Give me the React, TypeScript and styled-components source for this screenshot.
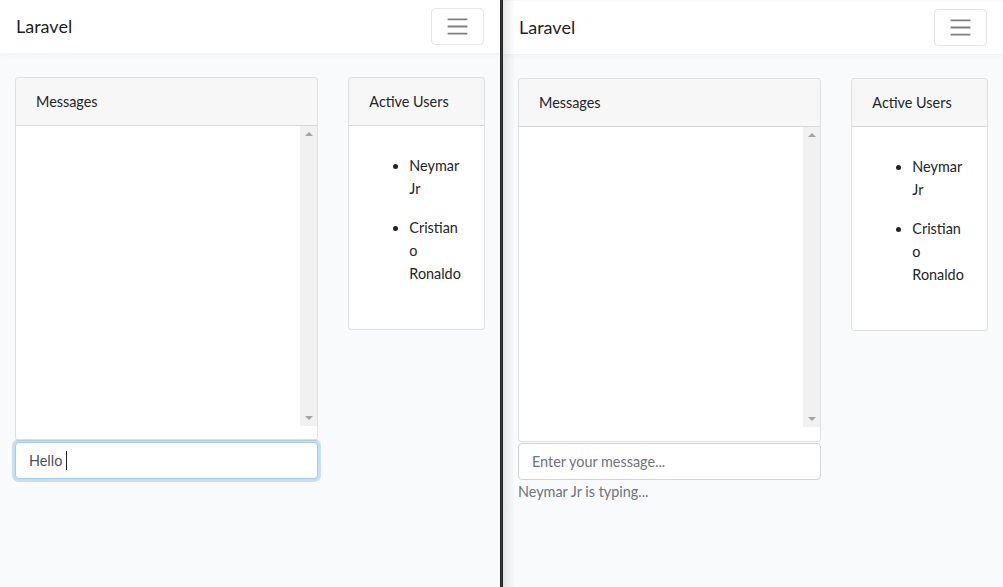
import React from "react";
import styled, { createGlobalStyle } from "styled-components";

const Global = createGlobalStyle`
  html, body { margin: 0; padding: 0; background: #f8fafc; }
  body {
    font-family: Lato, "Noto Sans", sans-serif;
    font-size: 14.4px;
    line-height: 1.6;
    color: #212529;
  }
  * { box-sizing: border-box; }
`;

const Screen = styled.div`
  display: flex;
  width: 1003px;
  height: 587px;
  overflow: hidden;
`;

const Pane = styled.div<{ $shift: number; $shadow?: boolean }>`
  position: relative;
  width: 500px;
  flex: 0 0 500px;
  height: 100%;
  background: #f8fafc;
  padding-top: ${(p) => p.$shift}px;
  &::before {
    content: "";
    display: ${(p) => (p.$shadow ? "block" : "none")};
    position: absolute;
    top: 0;
    left: 0;
    bottom: 0;
    width: 12px;
    background: linear-gradient(to right, rgba(0, 0, 0, 0.09), rgba(0, 0, 0, 0));
    pointer-events: none;
    z-index: 5;
  }
`;

const TopFill = styled.div`
  background: #fff;
`;

const Divider = styled.div`
  flex: 0 0 3px;
  width: 3px;
  height: 100%;
  background: linear-gradient(to right, #1c1c1c, #3a3a3a, #1c1c1c);
`;

const Navbar = styled.nav`
  display: flex;
  align-items: center;
  justify-content: space-between;
  height: 53px;
  padding: 8px 16px;
  background: #fff;
  box-shadow: 0 2px 4px rgba(0, 0, 0, 0.04);
`;

const Brand = styled.span`
  font-size: 18px;
  line-height: 1.6;
  color: rgba(0, 0, 0, 0.9);
`;

const Toggler = styled.button`
  display: flex;
  align-items: center;
  justify-content: center;
  width: 53px;
  height: 37px;
  padding: 0;
  background: transparent;
  border: 1px solid rgba(0, 0, 0, 0.1);
  border-radius: 4px;
`;

const Container = styled.div`
  display: grid;
  grid-template-columns: 8fr 4fr;
  padding-top: 24px;
`;

const Col = styled.div`
  padding: 0 15px;
  min-width: 0;
`;

const Card = styled.div`
  background: #fff;
  border: 1px solid rgba(0, 0, 0, 0.125);
  border-radius: 4px;
  overflow: hidden;
`;

const CardHeader = styled.div`
  padding: 12px 20px;
  background: rgba(0, 0, 0, 0.03);
  border-bottom: 1px solid rgba(0, 0, 0, 0.125);
  line-height: 23px;
`;

const MessagesBody = styled.div`
  padding-bottom: 14px;
`;

const ScrollArea = styled.div`
  display: flex;
  height: 300px;
`;

const MessageList = styled.div`
  flex: 1;
`;

const Scrollbar = styled.div`
  display: flex;
  flex-direction: column;
  justify-content: space-between;
  align-items: center;
  width: 17px;
  background: #f1f1f1;
  padding: 6px 0;
`;

const Arrow = styled.div<{ $dir: "up" | "down" }>`
  width: 0;
  height: 0;
  border-left: 4px solid transparent;
  border-right: 4px solid transparent;
  ${(p) =>
    p.$dir === "up"
      ? "border-bottom: 4px solid #a3a3a3;"
      : "border-top: 4px solid #a3a3a3;"}
`;

const InputBox = styled.div<{ $focused?: boolean }>`
  display: flex;
  align-items: center;
  height: 37px;
  margin-top: 1px;
  padding: 0 13px;
  background: #fff;
  border: 1px solid ${(p) => (p.$focused ? "#a1cbef" : "#ced4da")};
  border-radius: 4px;
  box-shadow: ${(p) => (p.$focused ? "0 0 0 3px rgba(52, 144, 220, 0.25)" : "none")};
  color: #495057;
  line-height: 23px;
`;

const Placeholder = styled.span`
  color: #6c757d;
`;

const Caret = styled.span`
  display: inline-block;
  width: 1px;
  height: 19px;
  margin-left: 4px;
  background: #222;
`;

const Typing = styled.div`
  color: #6c757d;
  line-height: 23px;
`;

const UsersBody = styled.div`
  padding: 20px;
`;

const UserList = styled.ul`
  margin: 0 0 16px;
  padding-left: 40px;
`;

const UserItem = styled.li`
  padding: 8px 0;
  line-height: 23px;
  overflow-wrap: anywhere;
  word-break: break-word;
`;

const Hamburger = () => (
  <svg width="27" height="27" viewBox="0 0 30 30">
    <path
      d="M4 7h22M4 15h22M4 23h22"
      stroke="rgba(0,0,0,0.5)"
      strokeWidth="2"
      strokeLinecap="butt"
    />
  </svg>
);

const users = ["Neymar Jr", "Cristiano Ronaldo"];

const ChatPane = ({ shift, shadow, focused }: { shift: number; shadow?: boolean; focused?: boolean }) => (
  <Pane $shift={shift} $shadow={shadow}>
    <TopFill>
      <Navbar>
        <Brand>Laravel</Brand>
        <Toggler>
          <Hamburger />
        </Toggler>
      </Navbar>
    </TopFill>
    <Container>
      <Col>
        <Card>
          <CardHeader>Messages</CardHeader>
          <MessagesBody>
            <ScrollArea>
              <MessageList />
              <Scrollbar>
                <Arrow $dir="up" />
                <Arrow $dir="down" />
              </Scrollbar>
            </ScrollArea>
          </MessagesBody>
        </Card>
        {focused ? (
          <InputBox $focused>
            Hello
            <Caret />
          </InputBox>
        ) : (
          <InputBox>
            <Placeholder>Enter your message...</Placeholder>
          </InputBox>
        )}
        {!focused && <Typing>Neymar Jr is typing...</Typing>}
      </Col>
      <Col>
        <Card>
          <CardHeader>Active Users</CardHeader>
          <UsersBody>
            <UserList>
              {users.map((u) => (
                <UserItem key={u}>{u === "Cristiano Ronaldo" ? "Cristian\u200Bo Ronaldo" : u}</UserItem>
              ))}
            </UserList>
          </UsersBody>
        </Card>
      </Col>
    </Container>
  </Pane>
);

export default function App() {
  return (
    <>
      <Global />
      <Screen>
        <ChatPane shift={0} focused />
        <Divider />
        <ChatPane shift={1} shadow />
      </Screen>
    </>
  );
}
